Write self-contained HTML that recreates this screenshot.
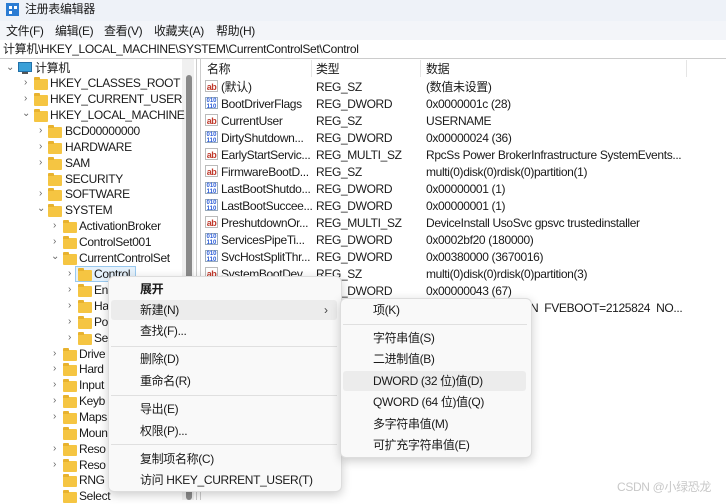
<!DOCTYPE html>
<html><head><meta charset="utf-8"><style>
*{margin:0;padding:0;box-sizing:border-box}
body{width:726px;height:500px;overflow:hidden;background:#fff;font-family:"Liberation Sans","Noto Sans CJK SC",sans-serif;font-size:12px;letter-spacing:-0.35px;color:#1a1a1a;position:relative}
.a{position:absolute;white-space:nowrap;line-height:16px}
.fold{position:absolute;width:14px;height:11px;background:#f5c542;border-radius:1px}
.fold:before{content:"";position:absolute;left:0;top:-2px;width:6px;height:3px;background:#e8b22e;border-radius:1px 1px 0 0}
.arr{position:absolute;font-size:10px;color:#666;line-height:16px}
.ab{position:absolute;width:13px;height:12px;font-size:9px;line-height:12px;color:#c0392b;font-weight:bold;border:1px solid #bbb;background:#fff;text-align:center;letter-spacing:-0.5px}
.bn{position:absolute;width:13px;height:12px;font-size:6px;line-height:6px;color:#2a5bd7;font-weight:bold;border:1px solid #9ab;background:#fff;text-align:center;letter-spacing:0}
.sep{position:absolute;height:1px;background:#e0e0e0}
</style></head><body>
<div style="position:absolute;left:0;top:0;width:726px;height:21px;background:#eef2f8"></div>
<div style="position:absolute;left:6px;top:3px;width:13px;height:13px;background:#2b7cd3"></div>
<div style="position:absolute;left:9px;top:6px;width:3px;height:3px;background:#fff"></div>
<div style="position:absolute;left:14px;top:6px;width:3px;height:3px;background:#fff"></div>
<div style="position:absolute;left:9px;top:11px;width:3px;height:3px;background:#fff"></div>
<div class="a" style="left:25px;top:1px;font-size:12px">注册表编辑器</div>
<div style="position:absolute;left:0;top:21px;width:726px;height:19px;background:#f3f5f9"></div>
<div class="a" style="left:6px;top:23px">文件(F)</div>
<div class="a" style="left:55px;top:23px">编辑(E)</div>
<div class="a" style="left:104px;top:23px">查看(V)</div>
<div class="a" style="left:154px;top:23px">收藏夹(A)</div>
<div class="a" style="left:216px;top:23px">帮助(H)</div>
<div class="a" style="left:3px;top:41px">计算机\HKEY_LOCAL_MACHINE\SYSTEM\CurrentControlSet\Control</div>
<div style="position:absolute;left:0;top:58px;width:726px;height:1px;background:#ccc"></div>
<div style="position:absolute;left:182px;top:59px;width:12px;height:441px;background:#f0f0f0"></div>
<div style="position:absolute;left:186px;top:75px;width:6px;height:425px;background:#8a8a8a;border-radius:3px"></div>
<div style="position:absolute;left:196px;top:59px;width:1px;height:441px;background:#ccc"></div>
<div style="position:absolute;left:200px;top:59px;width:1px;height:441px;background:#ccc"></div>
<div class="arr" style="left:6px;top:60px">⌄</div>
<div style="position:absolute;left:18px;top:62px;width:14px;height:10px;background:#3aa0d8;border:1px solid #2270a8"></div>
<div style="position:absolute;left:22px;top:72px;width:6px;height:2px;background:#555"></div>
<div class="a" style="left:35px;top:60px">计算机</div>

<div class="arr" style="left:24px;top:75px">›</div><div class="fold" style="left:34px;top:79px"></div><div class="a" style="left:50px;top:75px">HKEY_CLASSES_ROOT</div>
<div class="arr" style="left:24px;top:91px">›</div><div class="fold" style="left:34px;top:95px"></div><div class="a" style="left:50px;top:91px">HKEY_CURRENT_USER</div>
<div class="arr" style="left:22px;top:106px">⌄</div><div class="fold" style="left:34px;top:111px"></div><div class="a" style="left:50px;top:107px">HKEY_LOCAL_MACHINE</div>

<div class="arr" style="left:39px;top:123px">›</div><div class="fold" style="left:48px;top:127px"></div><div class="a" style="left:65px;top:123px">BCD00000000</div>
<div class="arr" style="left:39px;top:139px">›</div><div class="fold" style="left:48px;top:143px"></div><div class="a" style="left:65px;top:139px">HARDWARE</div>
<div class="arr" style="left:39px;top:155px">›</div><div class="fold" style="left:48px;top:159px"></div><div class="a" style="left:65px;top:155px">SAM</div>
<div class="fold" style="left:48px;top:175px"></div><div class="a" style="left:65px;top:171px">SECURITY</div>
<div class="arr" style="left:39px;top:186px">›</div><div class="fold" style="left:48px;top:190px"></div><div class="a" style="left:65px;top:186px">SOFTWARE</div>
<div class="arr" style="left:37px;top:201px">⌄</div><div class="fold" style="left:48px;top:206px"></div><div class="a" style="left:65px;top:202px">SYSTEM</div>

<div class="arr" style="left:53px;top:218px">›</div><div class="fold" style="left:63px;top:222px"></div><div class="a" style="left:79px;top:218px">ActivationBroker</div>
<div class="arr" style="left:53px;top:234px">›</div><div class="fold" style="left:63px;top:238px"></div><div class="a" style="left:79px;top:234px">ControlSet001</div>
<div class="arr" style="left:51px;top:249px">⌄</div><div class="fold" style="left:63px;top:254px"></div><div class="a" style="left:79px;top:250px">CurrentControlSet</div>

<div style="position:absolute;left:75px;top:266px;width:61px;height:16px;background:#e5f1fb;border:1px solid #99c9ef"></div>
<div class="arr" style="left:68px;top:266px">›</div><div class="fold" style="left:78px;top:270px"></div><div class="a" style="left:94px;top:266px">Control</div>
<div class="arr" style="left:68px;top:282px">›</div><div class="fold" style="left:78px;top:286px"></div><div class="a" style="left:94px;top:282px">En</div>
<div class="arr" style="left:68px;top:298px">›</div><div class="fold" style="left:78px;top:302px"></div><div class="a" style="left:94px;top:298px">Ha</div>
<div class="arr" style="left:68px;top:314px">›</div><div class="fold" style="left:78px;top:318px"></div><div class="a" style="left:94px;top:314px">Po</div>
<div class="arr" style="left:68px;top:330px">›</div><div class="fold" style="left:78px;top:334px"></div><div class="a" style="left:94px;top:330px">Se</div>

<div class="arr" style="left:53px;top:346px">›</div><div class="fold" style="left:63px;top:350px"></div><div class="a" style="left:79px;top:346px">Drive</div>
<div class="arr" style="left:53px;top:361px">›</div><div class="fold" style="left:63px;top:365px"></div><div class="a" style="left:79px;top:361px">Hard</div>
<div class="arr" style="left:53px;top:377px">›</div><div class="fold" style="left:63px;top:381px"></div><div class="a" style="left:79px;top:377px">Input</div>
<div class="arr" style="left:53px;top:393px">›</div><div class="fold" style="left:63px;top:397px"></div><div class="a" style="left:79px;top:393px">Keyb</div>
<div class="arr" style="left:53px;top:409px">›</div><div class="fold" style="left:63px;top:413px"></div><div class="a" style="left:79px;top:409px">Maps</div>
<div class="fold" style="left:63px;top:429px"></div><div class="a" style="left:79px;top:425px">Moun</div>
<div class="arr" style="left:53px;top:441px">›</div><div class="fold" style="left:63px;top:445px"></div><div class="a" style="left:79px;top:441px">Reso</div>
<div class="arr" style="left:53px;top:457px">›</div><div class="fold" style="left:63px;top:461px"></div><div class="a" style="left:79px;top:457px">Reso</div>
<div class="fold" style="left:63px;top:476px"></div><div class="a" style="left:79px;top:472px">RNG</div>
<div class="fold" style="left:63px;top:492px"></div><div class="a" style="left:79px;top:488px">Select</div>

<div class="a" style="left:207px;top:61px">名称</div>
<div class="a" style="left:316px;top:61px">类型</div>
<div class="a" style="left:426px;top:61px">数据</div>
<div style="position:absolute;left:311px;top:60px;width:1px;height:17px;background:#e5e5e5"></div>
<div style="position:absolute;left:420px;top:60px;width:1px;height:17px;background:#e5e5e5"></div>
<div style="position:absolute;left:686px;top:60px;width:1px;height:17px;background:#e5e5e5"></div>

<div class="ab" style="left:205px;top:80px">ab</div><div class="a" style="left:221px;top:79px">(默认)</div><div class="a" style="left:316px;top:79px">REG_SZ</div><div class="a" style="left:426px;top:79px">(数值未设置)</div>
<div class="bn" style="left:205px;top:97px">010<br>110</div><div class="a" style="left:221px;top:96px">BootDriverFlags</div><div class="a" style="left:316px;top:96px">REG_DWORD</div><div class="a" style="left:426px;top:96px">0x0000001c (28)</div>
<div class="ab" style="left:205px;top:114px">ab</div><div class="a" style="left:221px;top:113px">CurrentUser</div><div class="a" style="left:316px;top:113px">REG_SZ</div><div class="a" style="left:426px;top:113px">USERNAME</div>
<div class="bn" style="left:205px;top:131px">010<br>110</div><div class="a" style="left:221px;top:130px">DirtyShutdown...</div><div class="a" style="left:316px;top:130px">REG_DWORD</div><div class="a" style="left:426px;top:130px">0x00000024 (36)</div>
<div class="ab" style="left:205px;top:148px">ab</div><div class="a" style="left:221px;top:147px">EarlyStartServic...</div><div class="a" style="left:316px;top:147px">REG_MULTI_SZ</div><div class="a" style="left:426px;top:147px">RpcSs Power BrokerInfrastructure SystemEvents...</div>
<div class="ab" style="left:205px;top:165px">ab</div><div class="a" style="left:221px;top:164px">FirmwareBootD...</div><div class="a" style="left:316px;top:164px">REG_SZ</div><div class="a" style="left:426px;top:164px">multi(0)disk(0)rdisk(0)partition(1)</div>
<div class="bn" style="left:205px;top:182px">010<br>110</div><div class="a" style="left:221px;top:181px">LastBootShutdo...</div><div class="a" style="left:316px;top:181px">REG_DWORD</div><div class="a" style="left:426px;top:181px">0x00000001 (1)</div>
<div class="bn" style="left:205px;top:199px">010<br>110</div><div class="a" style="left:221px;top:198px">LastBootSuccee...</div><div class="a" style="left:316px;top:198px">REG_DWORD</div><div class="a" style="left:426px;top:198px">0x00000001 (1)</div>
<div class="ab" style="left:205px;top:216px">ab</div><div class="a" style="left:221px;top:215px">PreshutdownOr...</div><div class="a" style="left:316px;top:215px">REG_MULTI_SZ</div><div class="a" style="left:426px;top:215px">DeviceInstall UsoSvc gpsvc trustedinstaller</div>
<div class="bn" style="left:205px;top:233px">010<br>110</div><div class="a" style="left:221px;top:232px">ServicesPipeTi...</div><div class="a" style="left:316px;top:232px">REG_DWORD</div><div class="a" style="left:426px;top:232px">0x0002bf20 (180000)</div>
<div class="bn" style="left:205px;top:250px">010<br>110</div><div class="a" style="left:221px;top:249px">SvcHostSplitThr...</div><div class="a" style="left:316px;top:249px">REG_DWORD</div><div class="a" style="left:426px;top:249px">0x00380000 (3670016)</div>
<div class="ab" style="left:205px;top:267px">ab</div><div class="a" style="left:221px;top:266px">SystemBootDev...</div><div class="a" style="left:316px;top:266px">REG_SZ</div><div class="a" style="left:426px;top:266px">multi(0)disk(0)rdisk(0)partition(3)</div>
<div class="a" style="left:316px;top:283px">REG_DWORD</div><div class="a" style="left:426px;top:283px">0x00000043 (67)</div>
<div class="a" style="left:530px;top:300px">N&nbsp; FVEBOOT=2125824&nbsp; NO...</div>

<div style="position:absolute;left:108px;top:276px;width:234px;height:216px;background:#f9f9f9;border:1px solid #ddd;border-radius:6px;box-shadow:0 3px 10px rgba(0,0,0,.2)"></div>
<div style="position:absolute;left:111px;top:300px;width:226px;height:20px;background:#ececec;border-radius:3px"></div>
<div class="a" style="left:140px;top:281px;font-weight:bold">展开</div>
<div class="a" style="left:140px;top:302px">新建(N)</div><div class="a" style="left:324px;top:302px;color:#444">›</div>
<div class="a" style="left:140px;top:323px">查找(F)...</div>
<div class="sep" style="left:111px;top:346px;width:226px"></div>
<div class="a" style="left:140px;top:351px">删除(D)</div>
<div class="a" style="left:140px;top:373px">重命名(R)</div>
<div class="sep" style="left:111px;top:395px;width:226px"></div>
<div class="a" style="left:140px;top:401px">导出(E)</div>
<div class="a" style="left:140px;top:423px">权限(P)...</div>
<div class="sep" style="left:111px;top:444px;width:226px"></div>
<div class="a" style="left:140px;top:451px">复制项名称(C)</div>
<div class="a" style="left:140px;top:472px">访问 HKEY_CURRENT_USER(T)</div>

<div style="position:absolute;left:340px;top:298px;width:192px;height:160px;background:#f9f9f9;border:1px solid #ddd;border-radius:6px;box-shadow:0 3px 10px rgba(0,0,0,.2)"></div>
<div style="position:absolute;left:343px;top:371px;width:183px;height:20px;background:#ececec;border-radius:3px"></div>
<div class="a" style="left:373px;top:302px">项(K)</div>
<div class="sep" style="left:343px;top:324px;width:184px"></div>
<div class="a" style="left:373px;top:330px">字符串值(S)</div>
<div class="a" style="left:373px;top:351px">二进制值(B)</div>
<div class="a" style="left:373px;top:373px">DWORD (32 位)值(D)</div>
<div class="a" style="left:373px;top:394px">QWORD (64 位)值(Q)</div>
<div class="a" style="left:373px;top:416px">多字符串值(M)</div>
<div class="a" style="left:373px;top:437px">可扩充字符串值(E)</div>

<div class="a" style="left:617px;top:479px;color:#c8c8c8;font-size:12px">CSDN @小绿恐龙</div>
</body></html>
